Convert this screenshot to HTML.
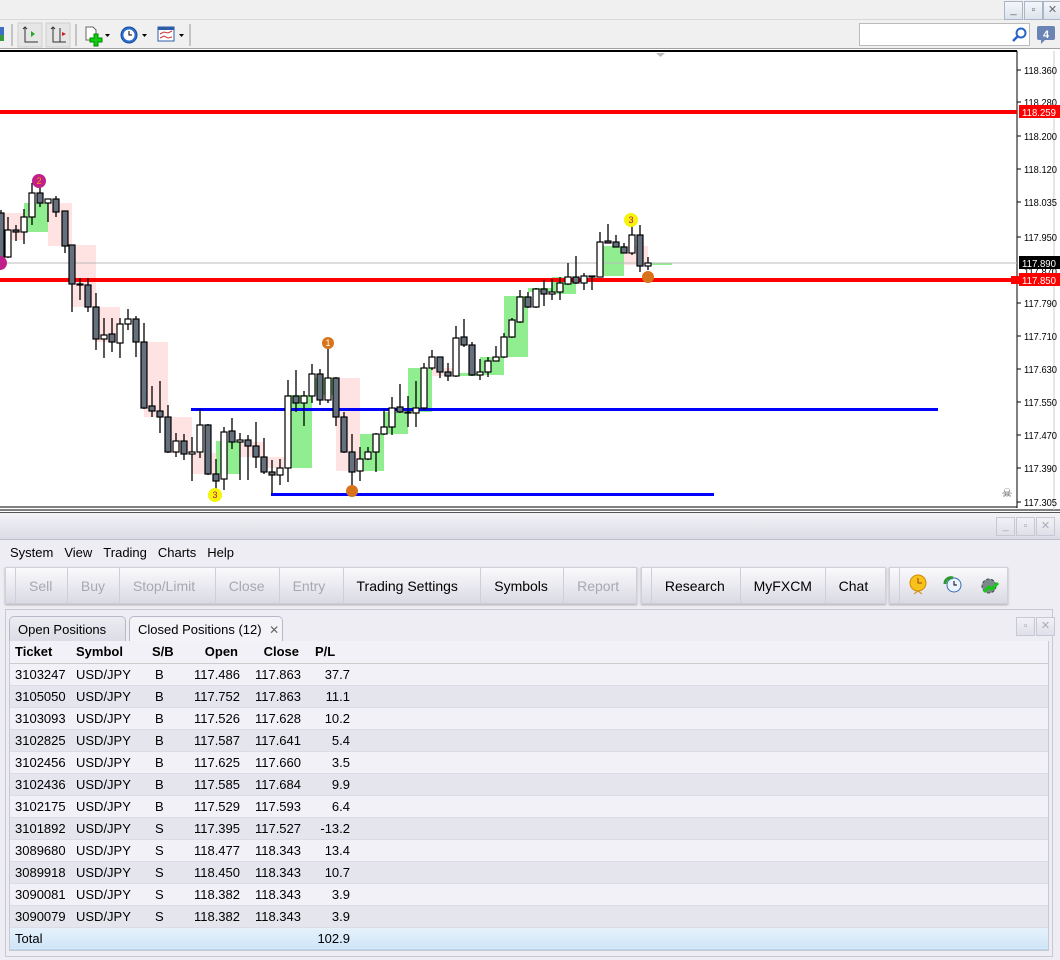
<!DOCTYPE html>
<html><head><meta charset="utf-8"><style>
*{margin:0;padding:0;box-sizing:border-box}
body{width:1060px;height:960px;overflow:hidden;background:#f0f0f0;font-family:"Liberation Sans",sans-serif;font-size:13px;color:#000;position:relative}
.abs{position:absolute}
.tb{top:0;left:0;width:1060px;height:20px;background:#f0f0f0;border-bottom:1px solid #d8d8d8}
.wb{top:1px;width:19px;height:19px;border:1px solid #aab6c8;background:linear-gradient(#f4f6fa,#dde3ec);color:#667;font-size:11px;text-align:center;line-height:17px}
.tool{top:20px;left:0;width:1060px;height:29px;background:#f0f0f0;border-bottom:1px solid #a0a0a0}
.ax{font-family:"Liberation Sans",sans-serif;font-size:10.5px;fill:#000}
.pnl{left:0;top:512px;width:1060px;height:448px;background:#eeedf3}
.ttl{left:0;top:512px;width:1060px;height:28px;background:linear-gradient(#f3f3f7,#dcdce6);border-top:1px solid #555;border-bottom:1px solid #c0c0cc}
.pb{width:19px;height:19px;border:1px solid #c8c8d4;background:linear-gradient(#f0f0f5,#e0e0ea);color:#aab;font-size:11px;text-align:center;line-height:17px}
.menu{left:10px;top:545px;font-size:13px;word-spacing:0}
.menu span{margin-right:11px}
.btnbar{top:567px;height:37px;background:linear-gradient(#fafafc,#dadae4);border:1px solid #d0d0da;box-shadow:0 1px 2px #aaa;display:flex}
.btnbar div{height:35px;line-height:36px;padding:0 13px;border-right:1px solid #cfcfd9;font-size:14px;color:#000}
.btnbar .dis{color:#a8a8b0}
.grip{width:10px;padding:0!important}
.tab{top:616px;height:26px;border:1px solid #b8b8c8;border-bottom:none;border-radius:5px 5px 0 0;line-height:25px;padding-left:8px;font-size:13px}
table{border-collapse:collapse;font-size:13px}
td{height:22px;padding:0;white-space:nowrap}
tr.a td{background:#f2f1f7;border-bottom:1px solid #dcdce6}
tr.b td{background:#e5e5ee;border-bottom:1px solid #dcdce6}
.r{text-align:right}
</style></head><body>
<div class="abs tb"></div>
<div class="abs wb" style="left:1004px">_</div><div class="abs wb" style="left:1024px">▫</div><div class="abs wb" style="left:1043px">✕</div>
<div class="abs tool"></div>
<svg class="abs" style="left:0;top:22px" width="200" height="26">
<rect x="-4" y="5" width="8" height="14" fill="#3d6fc4"/><rect x="-4" y="13" width="8" height="6" fill="#3a9a3a"/>
<line x1="12" y1="2" x2="12" y2="24" stroke="#999"/>
<rect x="18" y="1" width="24" height="24" fill="#e6e6e6" stroke="#cfcfcf"/>
<path d="M25 5v15h13M23 7l2-2 2 2" stroke="#333" fill="none"/><path d="M31 9l4 3-4 3z" fill="#2a2"/>
<rect x="46" y="1" width="24" height="24" fill="#e6e6e6" stroke="#cfcfcf"/>
<path d="M53 5v15h13M51 7l2-2 2 2M60 6v14" stroke="#333" fill="none"/><path d="M66 12l-4-2v4z" fill="#c22"/>
<line x1="76" y1="2" x2="76" y2="24" stroke="#999"/>
<path d="M86 5h7l3 3v10h-10z" fill="#fff" stroke="#666"/><path d="M94 12h4v4h4v4h-4v4h-4v-4h-4v-4h4z" fill="#1c1" stroke="#080"/>
<path d="M105 12h5l-2.5 3z" fill="#000"/>
<circle cx="129" cy="13" r="8" fill="#2d6fd0" stroke="#174a9a"/><circle cx="129" cy="13" r="5.5" fill="#fff"/><path d="M129 9v4h3" stroke="#000" fill="none"/>
<path d="M142 12h5l-2.5 3z" fill="#000"/>
<rect x="158" y="5" width="16" height="14" fill="#fff" stroke="#2d5ca8"/><rect x="158" y="5" width="16" height="3" fill="#2d5ca8"/><path d="M160 12l4-2 4 1 4-2M160 16l4-2 4 2 4-1" stroke="#c33" fill="none"/>
<path d="M179 12h5l-2.5 3z" fill="#000"/>
<line x1="190" y1="2" x2="190" y2="24" stroke="#999"/>
</svg>
<div class="abs" style="left:859px;top:23px;width:171px;height:23px;background:#fff;border:1px solid #bbb"></div>
<svg class="abs" style="left:1010px;top:26px" width="18" height="18"><circle cx="11" cy="7" r="4.5" fill="none" stroke="#2766c6" stroke-width="2"/><path d="M8 10l-5 5" stroke="#2766c6" stroke-width="2.5"/></svg>
<svg class="abs" style="left:1036px;top:25px" width="20" height="20"><rect x="1" y="1" width="18" height="14" rx="2" fill="#6a85b5"/><path d="M5 15v4l4-4z" fill="#6a85b5"/><text x="10" y="13" font-size="11" font-weight="bold" fill="#fff" text-anchor="middle" font-family="Liberation Sans">4</text></svg>

<svg class="abs" style="left:0;top:49px" width="1060" height="463">
<g transform="translate(0,-49)">
<rect x="0" y="49" width="1060" height="463" fill="#fff"/>
<line x1="0" y1="51" x2="1017" y2="51" stroke="#000" stroke-width="2"/>
<path d="M656 53h9l-4.5 4z" fill="#bbb"/>
<line x1="1017" y1="51" x2="1017" y2="508" stroke="#000"/>
<line x1="0" y1="507" x2="1017" y2="507" stroke="#000"/><line x1="0" y1="510" x2="1060" y2="510" stroke="#000"/>
<line x1="1054" y1="51" x2="1054" y2="510" stroke="#ccc"/>
<g fill="#90ee90">
<rect x="24" y="203" width="24" height="29"/><rect x="216" y="441" width="24" height="33"/><rect x="288" y="395" width="24" height="73"/><rect x="312" y="378" width="24" height="17"/><rect x="360" y="434" width="24" height="37"/><rect x="384" y="412" width="24" height="22"/><rect x="408" y="368" width="24" height="44"/><rect x="456" y="373" width="24" height="3"/><rect x="480" y="357" width="24" height="18"/><rect x="504" y="296" width="24" height="61"/><rect x="528" y="288" width="24" height="4"/><rect x="552" y="277" width="24" height="17"/><rect x="600" y="246" width="24" height="30"/><rect x="648" y="263" width="24" height="2"/>
</g>
<g fill="#ffe2e2">
<rect x="0" y="213" width="24" height="27"/><rect x="48" y="203" width="24" height="43"/><rect x="72" y="245" width="24" height="62"/><rect x="96" y="307" width="24" height="35"/><rect x="144" y="342" width="24" height="75"/><rect x="168" y="417" width="24" height="36"/><rect x="192" y="453" width="24" height="21"/><rect x="240" y="442" width="24" height="15"/><rect x="264" y="457" width="24" height="11"/><rect x="336" y="378" width="24" height="93"/><rect x="432" y="368" width="24" height="8"/><rect x="624" y="246" width="24" height="19"/>
</g>
<line x1="0" y1="263" x2="1017" y2="263" stroke="#bbb"/>
<rect x="0" y="110" width="1017" height="4" fill="#f00"/>
<rect x="0" y="278" width="1017" height="4" fill="#f00"/>
<rect x="1011" y="276" width="8" height="8" fill="#f00"/>
<rect x="191" y="408" width="747" height="3" fill="#00f"/>
<rect x="271" y="493" width="443" height="3" fill="#00f"/>
<g stroke="#000" stroke-width="1.3">
<path d="M1 210V262M8 217V258M16 225V241M24 209V244M32 183V225M40 182V207M48 199V222M56 196V217M65 211V253M72 245V312M80 278V300M88 278V312M96 293V350M104 318V358M112 318V352M120 318V358M128 309V330M136 316V357M144 323V409M152 386V417M160 381V433M168 405V453M176 433V457M184 434V460M192 437V481M200 409V458M208 424V475M216 459V490M224 427V490M232 418V449M240 433V480M248 435V480M256 422V468M264 438V474M272 460V494M280 459V485M288 380V482M296 370V412M304 391V426M312 364V403M320 369V405M328 343V403M336 377V426M344 412V453M352 434V493M360 447V481M368 447V460M376 433V472M384 409V435M392 397V435M400 384V413M408 396V427M416 381V427M424 363V410M432 350V370M440 357V378M448 363V381M456 326V377M464 319V347M472 342V376M480 359V380M488 357V377M496 346V361M504 333V358M512 318V338M520 290V323M528 292V308M536 288V308M544 280V306M552 279V300M560 277V300M568 263V285M576 256V284M584 273V290M592 276V290M600 232V277M608 224V243M616 235V247M624 243V253M632 223V255M640 225V272M648 257V270"/>
</g>
<g stroke="#000" stroke-width="1.2" fill="#65707e">
<rect x="-2" y="213" width="6" height="45"/><rect x="13" y="230" width="6" height="2"/><rect x="37" y="193" width="6" height="10"/><rect x="53" y="199" width="6" height="13"/><rect x="62" y="211" width="6" height="35"/><rect x="69" y="245" width="6" height="39"/><rect x="77" y="284" width="6" height="1"/><rect x="85" y="285" width="6" height="22"/><rect x="93" y="307" width="6" height="32"/><rect x="109" y="334" width="6" height="8"/><rect x="133" y="319" width="6" height="23"/><rect x="141" y="342" width="6" height="66"/><rect x="149" y="406" width="6" height="5"/><rect x="157" y="411" width="6" height="6"/><rect x="165" y="417" width="6" height="35"/><rect x="181" y="441" width="6" height="13"/><rect x="205" y="425" width="6" height="49"/><rect x="213" y="474" width="6" height="7"/><rect x="229" y="431" width="6" height="11"/><rect x="245" y="440" width="6" height="6"/><rect x="253" y="446" width="6" height="11"/><rect x="261" y="457" width="6" height="15"/><rect x="269" y="472" width="6" height="3"/><rect x="293" y="396" width="6" height="7"/><rect x="317" y="374" width="6" height="26"/><rect x="333" y="378" width="6" height="39"/><rect x="341" y="417" width="6" height="35"/><rect x="349" y="452" width="6" height="20"/><rect x="397" y="407" width="6" height="5"/><rect x="405" y="412" width="6" height="1"/><rect x="437" y="357" width="6" height="15"/><rect x="445" y="372" width="6" height="4"/><rect x="461" y="337" width="6" height="8"/><rect x="469" y="345" width="6" height="30"/><rect x="525" y="297" width="6" height="10"/><rect x="541" y="289" width="6" height="5"/><rect x="573" y="277" width="6" height="6"/><rect x="589" y="276" width="6" height="1"/><rect x="605" y="241" width="6" height="2"/><rect x="613" y="242" width="6" height="5"/><rect x="621" y="247" width="6" height="6"/><rect x="637" y="235" width="6" height="31"/>
</g>
<g stroke="#000" stroke-width="1.2" fill="#fff">
<rect x="5" y="230" width="6" height="27"/><rect x="21" y="217" width="6" height="15"/><rect x="29" y="193" width="6" height="24"/><rect x="45" y="199" width="6" height="4"/><rect x="101" y="335" width="6" height="4"/><rect x="117" y="324" width="6" height="19"/><rect x="125" y="319" width="6" height="5"/><rect x="173" y="441" width="6" height="11"/><rect x="189" y="452" width="6" height="2"/><rect x="197" y="425" width="6" height="27"/><rect x="221" y="432" width="6" height="47"/><rect x="237" y="440" width="6" height="2"/><rect x="277" y="468" width="6" height="7"/><rect x="285" y="396" width="6" height="72"/><rect x="301" y="396" width="6" height="7"/><rect x="309" y="374" width="6" height="22"/><rect x="325" y="378" width="6" height="22"/><rect x="357" y="459" width="6" height="12"/><rect x="365" y="452" width="6" height="7"/><rect x="373" y="434" width="6" height="18"/><rect x="381" y="427" width="6" height="7"/><rect x="389" y="408" width="6" height="19"/><rect x="413" y="408" width="6" height="5"/><rect x="421" y="368" width="6" height="40"/><rect x="429" y="357" width="6" height="11"/><rect x="453" y="338" width="6" height="38"/><rect x="477" y="372" width="6" height="3"/><rect x="485" y="361" width="6" height="11"/><rect x="493" y="357" width="6" height="4"/><rect x="501" y="337" width="6" height="20"/><rect x="509" y="320" width="6" height="17"/><rect x="517" y="297" width="6" height="25"/><rect x="533" y="289" width="6" height="18"/><rect x="549" y="292" width="6" height="2"/><rect x="557" y="283" width="6" height="9"/><rect x="565" y="277" width="6" height="7"/><rect x="581" y="276" width="6" height="7"/><rect x="597" y="242" width="6" height="35"/><rect x="629" y="235" width="6" height="18"/><rect x="645" y="263" width="6" height="3"/>
</g>
<g font-family="Liberation Sans" font-size="9" text-anchor="middle">
<circle cx="39" cy="181" r="7" fill="#c0208a"/><text x="39" y="184" fill="#f90">2</text>
<circle cx="0" cy="263" r="7" fill="#c0208a"/>
<circle cx="215" cy="495" r="7" fill="#f5f50a"/><text x="215" y="498" fill="#c06">3</text>
<circle cx="328" cy="343" r="6" fill="#d9731b"/><text x="328" y="346" fill="#fff">1</text>
<circle cx="352" cy="491" r="6" fill="#d9731b"/>
<circle cx="631" cy="220" r="7" fill="#f5f50a"/><text x="631" y="223" fill="#c06">3</text>
<circle cx="648" cy="277" r="6" fill="#d9731b"/>
</g>
<g class="ax">
<path d="M1017 70h4M1017 102h4M1017 136h4M1017 169h4M1017 202h4M1017 237h4M1017 303h4M1017 336h4M1017 369h4M1017 402h4M1017 435h4M1017 468h4M1017 502h4" stroke="#000"/>
<text x="1024" y="74" textLength="33" lengthAdjust="spacingAndGlyphs">118.360</text><text x="1024" y="106" textLength="33" lengthAdjust="spacingAndGlyphs">118.280</text><text x="1024" y="140" textLength="33" lengthAdjust="spacingAndGlyphs">118.200</text><text x="1024" y="173" textLength="33" lengthAdjust="spacingAndGlyphs">118.120</text><text x="1024" y="206" textLength="33" lengthAdjust="spacingAndGlyphs">118.035</text><text x="1024" y="241" textLength="33" lengthAdjust="spacingAndGlyphs">117.950</text><text x="1024" y="275" textLength="33" lengthAdjust="spacingAndGlyphs">117.870</text><text x="1024" y="307" textLength="33" lengthAdjust="spacingAndGlyphs">117.790</text><text x="1024" y="340" textLength="33" lengthAdjust="spacingAndGlyphs">117.710</text><text x="1024" y="373" textLength="33" lengthAdjust="spacingAndGlyphs">117.630</text><text x="1024" y="406" textLength="33" lengthAdjust="spacingAndGlyphs">117.550</text><text x="1024" y="439" textLength="33" lengthAdjust="spacingAndGlyphs">117.470</text><text x="1024" y="472" textLength="33" lengthAdjust="spacingAndGlyphs">117.390</text><text x="1024" y="506" textLength="33" lengthAdjust="spacingAndGlyphs">117.305</text>
<rect x="1019" y="105" width="41" height="13" fill="#f00"/><text x="1022" y="116" fill="#fff" textLength="34" lengthAdjust="spacingAndGlyphs">118.259</text>
<rect x="1019" y="256" width="41" height="13" fill="#000"/><text x="1022" y="267" fill="#fff" textLength="34" lengthAdjust="spacingAndGlyphs">117.890</text>
<rect x="1019" y="273" width="41" height="13" fill="#f00"/><text x="1022" y="284" fill="#fff" textLength="34" lengthAdjust="spacingAndGlyphs">117.850</text>
</g>
<text x="1007" y="497" font-size="12" fill="#555" text-anchor="middle">☠</text>
</g></svg>

<div class="abs pnl"></div>
<div class="abs ttl"></div>
<div class="abs pb" style="left:996px;top:517px">_</div><div class="abs pb" style="left:1016px;top:517px">▫</div><div class="abs pb" style="left:1036px;top:517px">✕</div>
<div class="abs menu"><span>System</span><span>View</span><span>Trading</span><span>Charts</span><span>Help</span></div>
<div class="abs btnbar" style="left:5px;width:632px"><div class="grip"></div><div class="dis" style="width:52px">Sell</div><div class="dis" style="width:52px">Buy</div><div class="dis" style="width:96px">Stop/Limit</div><div class="dis" style="width:64px">Close</div><div class="dis" style="width:64px">Entry</div><div style="width:138px">Trading Settings</div><div style="width:83px">Symbols</div><div class="dis" style="width:72px;border:none">Report</div></div>
<div class="abs btnbar" style="left:641px;width:245px"><div class="grip"></div><div style="width:90px">Research</div><div style="width:85px">MyFXCM</div><div style="width:60px;border:none">Chat</div></div>
<div class="abs btnbar" style="left:889px;width:119px"><div class="grip"></div></div>
<svg class="abs" style="left:905px;top:572px" width="100" height="28"><circle cx="13" cy="11" r="8" fill="#f7c21c" stroke="#d08a00"/><path d="M13 6v5h4" stroke="#a04000" fill="none"/><path d="M9 22l4-3 4 3" stroke="#d08a00" fill="none"/>
<circle cx="49" cy="13" r="7" fill="#eaf3ff" stroke="#3a6ab0"/><path d="M49 9v4h3" stroke="#000" fill="none"/><path d="M40 12a6 6 0 0 1 8-6" stroke="#2a9a2a" stroke-width="3" fill="none"/>
<circle cx="84" cy="14" r="7" fill="#7a8a8a" stroke="#444" stroke-dasharray="3 2"/><path d="M79 20l5-5 3 2 6-6" stroke="#1c1" stroke-width="3" fill="none"/></svg>
<div class="abs" style="left:5px;top:609px;width:1048px;height:348px;border:1px solid #c8c8d4;background:#eeedf3"></div>
<div class="abs pb" style="left:1016px;top:617px">▫</div><div class="abs pb" style="left:1036px;top:617px">✕</div>
<div class="abs tab" style="left:9px;width:117px;background:linear-gradient(#ececf2,#dcdce6)">Open Positions</div>
<div class="abs tab" style="left:129px;width:154px;background:#f4f4f8">Closed Positions (12) <span style="color:#666;font-size:12px;margin-left:4px">✕</span></div>
<div class="abs" style="left:9px;top:641px;width:1040px;height:310px;background:#f2f1f7;border:1px solid #c8c8d4"></div>
<table class="abs" style="left:10px;top:641px;width:1038px">
<colgroup><col style="width:61px"><col style="width:69px"><col style="width:42px"><col style="width:58px"><col style="width:61px"><col style="width:52px"><col></colgroup>
<tr style="font-weight:bold"><td style="padding-left:5px;background:#f2f1f7;border-bottom:1px solid #ccc">Ticket</td><td style="padding-left:5px;background:#f2f1f7;border-bottom:1px solid #ccc">Symbol</td><td style="padding-left:12px;background:#f2f1f7;border-bottom:1px solid #ccc">S/B</td><td class="r" style="padding-right:2px;background:#f2f1f7;border-bottom:1px solid #ccc">Open</td><td class="r" style="padding-right:2px;background:#f2f1f7;border-bottom:1px solid #ccc">Close</td><td style="padding-left:14px;background:#f2f1f7;border-bottom:1px solid #ccc">P/L</td><td style="background:#f2f1f7;border-bottom:1px solid #ccc"></td></tr>
<tr class="a"><td style="padding-left:5px">3103247</td><td style="padding-left:5px">USD/JPY</td><td style="padding-left:15px">B</td><td class="r">117.486</td><td class="r">117.863</td><td class="r" style="padding-right:3px">37.7</td><td></td></tr>
<tr class="b"><td style="padding-left:5px">3105050</td><td style="padding-left:5px">USD/JPY</td><td style="padding-left:15px">B</td><td class="r">117.752</td><td class="r">117.863</td><td class="r" style="padding-right:3px">11.1</td><td></td></tr>
<tr class="a"><td style="padding-left:5px">3103093</td><td style="padding-left:5px">USD/JPY</td><td style="padding-left:15px">B</td><td class="r">117.526</td><td class="r">117.628</td><td class="r" style="padding-right:3px">10.2</td><td></td></tr>
<tr class="b"><td style="padding-left:5px">3102825</td><td style="padding-left:5px">USD/JPY</td><td style="padding-left:15px">B</td><td class="r">117.587</td><td class="r">117.641</td><td class="r" style="padding-right:3px">5.4</td><td></td></tr>
<tr class="a"><td style="padding-left:5px">3102456</td><td style="padding-left:5px">USD/JPY</td><td style="padding-left:15px">B</td><td class="r">117.625</td><td class="r">117.660</td><td class="r" style="padding-right:3px">3.5</td><td></td></tr>
<tr class="b"><td style="padding-left:5px">3102436</td><td style="padding-left:5px">USD/JPY</td><td style="padding-left:15px">B</td><td class="r">117.585</td><td class="r">117.684</td><td class="r" style="padding-right:3px">9.9</td><td></td></tr>
<tr class="a"><td style="padding-left:5px">3102175</td><td style="padding-left:5px">USD/JPY</td><td style="padding-left:15px">B</td><td class="r">117.529</td><td class="r">117.593</td><td class="r" style="padding-right:3px">6.4</td><td></td></tr>
<tr class="b"><td style="padding-left:5px">3101892</td><td style="padding-left:5px">USD/JPY</td><td style="padding-left:15px">S</td><td class="r">117.395</td><td class="r">117.527</td><td class="r" style="padding-right:3px">-13.2</td><td></td></tr>
<tr class="a"><td style="padding-left:5px">3089680</td><td style="padding-left:5px">USD/JPY</td><td style="padding-left:15px">S</td><td class="r">118.477</td><td class="r">118.343</td><td class="r" style="padding-right:3px">13.4</td><td></td></tr>
<tr class="b"><td style="padding-left:5px">3089918</td><td style="padding-left:5px">USD/JPY</td><td style="padding-left:15px">S</td><td class="r">118.450</td><td class="r">118.343</td><td class="r" style="padding-right:3px">10.7</td><td></td></tr>
<tr class="a"><td style="padding-left:5px">3090081</td><td style="padding-left:5px">USD/JPY</td><td style="padding-left:15px">S</td><td class="r">118.382</td><td class="r">118.343</td><td class="r" style="padding-right:3px">3.9</td><td></td></tr>
<tr class="b"><td style="padding-left:5px">3090079</td><td style="padding-left:5px">USD/JPY</td><td style="padding-left:15px">S</td><td class="r">118.382</td><td class="r">118.343</td><td class="r" style="padding-right:3px">3.9</td><td></td></tr>
<tr><td colspan="5" style="padding-left:5px;background:linear-gradient(#e6f2fc,#cfe5f8);border-bottom:1px solid #b8d4ec">Total</td><td class="r" style="padding-right:3px;background:linear-gradient(#e6f2fc,#cfe5f8);border-bottom:1px solid #b8d4ec">102.9</td><td style="background:linear-gradient(#e6f2fc,#cfe5f8);border-bottom:1px solid #b8d4ec"></td></tr>
</table>
</body></html>
